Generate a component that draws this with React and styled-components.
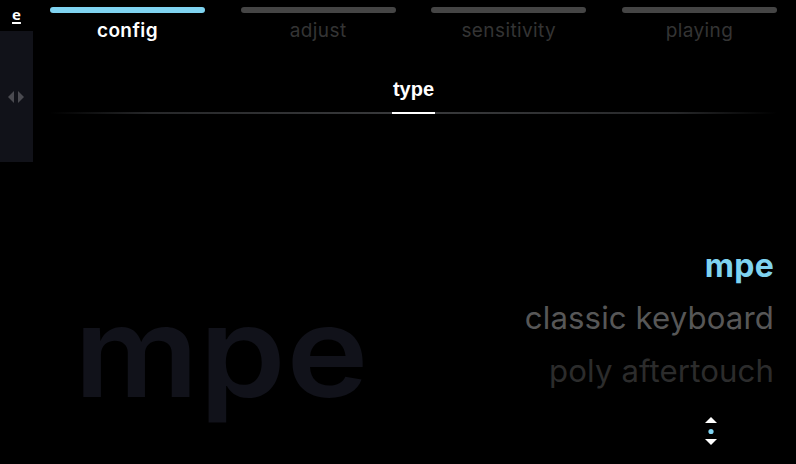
import React from 'react';
import styled, { createGlobalStyle } from 'styled-components';

const GlobalStyle = createGlobalStyle`
  html, body {
    margin: 0;
    padding: 0;
    background: #000;
  }
  body {
    font-family: Inter, "Noto Sans", sans-serif;
  }
`;

const tabs = ['config', 'adjust', 'sensitivity', 'playing'];
const types = ['mpe', 'classic keyboard', 'poly aftertouch'];

function App() {
  const activeTab = 0;
  const activeType = 0;

  return (
    <Screen>
      <GlobalStyle />
      <Rail>
        <Logo>e</Logo>
        <SidePanel>
          <svg width="18" height="12" viewBox="0 0 18 12">
            <polygon points="7,0 7,12 1,6" fill="#4a4a50" />
            <polygon points="11,0 11,12 17,6" fill="#4a4a50" />
          </svg>
        </SidePanel>
      </Rail>
      <Main>
        <Tabs>
          {tabs.map((t, i) => (
            <Tab key={t}>
              <TabBar active={i === activeTab} />
              <TabLabel active={i === activeTab}>{t}</TabLabel>
            </Tab>
          ))}
        </Tabs>
        <SectionHead>
          <SectionTitle>type</SectionTitle>
          <Divider />
        </SectionHead>
        <Body>
          <Watermark>{types[activeType]}</Watermark>
          <OptionColumn>
            {types.map((t, i) => (
              <Option key={t} level={Math.abs(i - activeType)}>{t}</Option>
            ))}
            <Stepper>
              <svg width="12" height="29" viewBox="0 0 12 29">
                <polygon points="6,0 12,6 0,6" fill="#ffffff" />
                <circle cx="6" cy="14.5" r="2.6" fill="#7fd3f0" />
                <polygon points="0,22 12,22 6,28" fill="#ffffff" />
              </svg>
            </Stepper>
          </OptionColumn>
        </Body>
      </Main>
    </Screen>
  );
}

const Screen = styled.div`
  width: 796px;
  height: 464px;
  background: #000;
  display: flex;
  overflow: hidden;
`;

const Rail = styled.div`
  width: 33px;
  display: flex;
  flex-direction: column;
`;

const Logo = styled.div`
  height: 31px;
  display: flex;
  justify-content: center;
  padding-top: 6px;
  box-sizing: border-box;
  color: #fff;
  font-family: "Open Sans", sans-serif;
  font-weight: 700;
  font-size: 15px;
  line-height: 16px;
  text-decoration: underline;
  text-underline-offset: 2px;
  text-decoration-thickness: 2px;
`;

const SidePanel = styled.div`
  height: 131px;
  background: #111219;
  display: flex;
  align-items: center;
  justify-content: center;
`;

const Main = styled.div`
  flex: 1;
  display: flex;
  flex-direction: column;
  padding: 7px 19px 0 17px;
`;

const Tabs = styled.div`
  display: grid;
  grid-template-columns: repeat(4, 155px);
  column-gap: 35.7px;
`;

const Tab = styled.div`
  display: flex;
  flex-direction: column;
  align-items: center;
`;

const TabBar = styled.div`
  width: 100%;
  height: 6px;
  border-radius: 3px;
  background: ${p => (p.active ? '#7fd3f0' : '#454545')};
`;

const TabLabel = styled.div`
  margin-top: 7px;
  font-size: 19px;
  line-height: 22px;
  letter-spacing: 0.4px;
  font-weight: ${p => (p.active ? 600 : 400)};
  color: ${p => (p.active ? '#ffffff' : '#343434')};
`;

const SectionHead = styled.div`
  margin-top: 35px;
  display: flex;
  flex-direction: column;
  align-items: center;
`;

const SectionTitle = styled.div`
  position: relative;
  z-index: 1;
  font-family: "Liberation Sans", Arial, sans-serif;
  font-weight: 700;
  font-size: 20px;
  line-height: 24px;
  color: #fff;
  padding: 0 1px 11px;
  border-bottom: 2px solid #fff;
`;

const Divider = styled.div`
  align-self: stretch;
  margin: -2px 0 0;
  height: 2px;
  background: linear-gradient(90deg, rgba(40,40,42,0) 0%, #27282a 14%, #3a3b3d 50%, #27282a 86%, rgba(40,40,42,0) 100%);
`;

const Body = styled.div`
  flex: 1;
  display: flex;
  justify-content: space-between;
  align-items: flex-end;
  padding: 0 3px 18px 27px;
`;

const Watermark = styled.div`
  font-size: 126px;
  line-height: 126px;
  font-weight: 600;
  color: #11121a;
  letter-spacing: 0.5px;
  margin-left: -3px;
  margin-bottom: 32px;
  transform: scaleX(1.1);
  transform-origin: left center;
`;

const OptionColumn = styled.div`
  display: flex;
  flex-direction: column;
  align-items: flex-end;
`;

const Option = styled.div`
  font-size: ${p => (p.level === 0 ? 32 : 31.2)}px;
  line-height: 53px;
  letter-spacing: ${p => (p.level === 0 ? 0.3 : 0.1)}px;
  font-weight: ${p => (p.level === 0 ? 700 : 400)};
  color: ${p => (p.level === 0 ? '#7fd3f0' : p.level === 1 ? '#575757' : '#2c2c2c')};
`;

const Stepper = styled.div`
  margin-top: 19px;
  margin-right: 57px;
  display: flex;
`;

export default App;
